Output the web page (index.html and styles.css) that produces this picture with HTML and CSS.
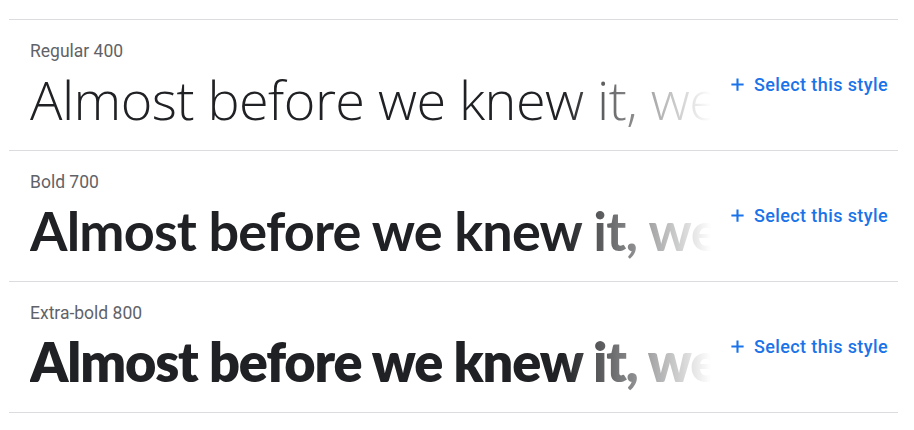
FILE: index.html
```html
<!DOCTYPE html>
<html lang="en">
<head>
<meta charset="utf-8">
<title>Styles</title>
<link rel="stylesheet" href="styles.css">
</head>
<body>
<div class="list">
  <div class="row">
    <div class="info">
      <div class="label">Regular 400</div>
      <div class="preview w400">Almost before we knew it, we had left the ground.</div>
    </div>
    <button class="select"><svg class="plus" viewBox="0 0 24 24" width="21" height="21"><path d="M19 13.2h-5.8V19h-2.4v-5.8H5v-2.4h5.8V5h2.4v5.8H19z" fill="currentColor"/></svg><span>Select this style</span></button>
  </div>
  <div class="row">
    <div class="info">
      <div class="label">Bold 700</div>
      <div class="preview w700">Almost before we knew it, we had left the ground.</div>
    </div>
    <button class="select"><svg class="plus" viewBox="0 0 24 24" width="21" height="21"><path d="M19 13.2h-5.8V19h-2.4v-5.8H5v-2.4h5.8V5h2.4v5.8H19z" fill="currentColor"/></svg><span>Select this style</span></button>
  </div>
  <div class="row">
    <div class="info">
      <div class="label">Extra-bold 800</div>
      <div class="preview w800">Almost before we knew it, we had left the ground.</div>
    </div>
    <button class="select"><svg class="plus" viewBox="0 0 24 24" width="21" height="21"><path d="M19 13.2h-5.8V19h-2.4v-5.8H5v-2.4h5.8V5h2.4v5.8H19z" fill="currentColor"/></svg><span>Select this style</span></button>
  </div>
</div>
</body>
</html>
```

FILE: styles.css
```css
html, body {
  margin: 0;
  padding: 0;
  background: #ffffff;
}

.list {
  margin: 19px 16px 0 9px;
  border-top: 1px solid #dadce0;
}

.row {
  display: flex;
  height: 130px;
  border-bottom: 1px solid #dadce0;
}

.info {
  flex: 1;
  min-width: 0;
  padding: 21px 0 0 21px;
}

.label {
  font-family: Roboto, "Liberation Sans", sans-serif;
  font-size: 17.5px;
  line-height: 21px;
  color: #5f6368;
}

.preview {
  margin-top: 5px;
  font-size: 54px;
  line-height: 65px;
  color: #202124;
  white-space: nowrap;
  overflow: hidden;
  -webkit-mask-image: linear-gradient(to right, #000 78%, transparent 100%);
  mask-image: linear-gradient(to right, #000 78%, transparent 100%);
}

.w400 {
  font-family: "Open Sans", "Noto Sans", sans-serif;
  font-weight: 340;
  letter-spacing: -0.55px;
}

.w700 {
  font-family: Lato, "Open Sans", sans-serif;
  font-weight: 700;
  letter-spacing: -0.8px;
}

.w800 {
  font-family: Lato, "Open Sans", sans-serif;
  font-weight: 800;
  letter-spacing: -1.15px;
}

.select {
  align-self: center;
  display: flex;
  align-items: center;
  gap: 6px;
  margin: 0 0 1px 0;
  padding: 0 10px 0 16px;
  border: 0;
  background: transparent;
  color: #1a73e8;
  font-family: Roboto, "Liberation Sans", sans-serif;
  font-size: 18px;
  font-weight: 500;
  letter-spacing: 0.4px;
  cursor: pointer;
}

.plus {
  display: block;
}
```
